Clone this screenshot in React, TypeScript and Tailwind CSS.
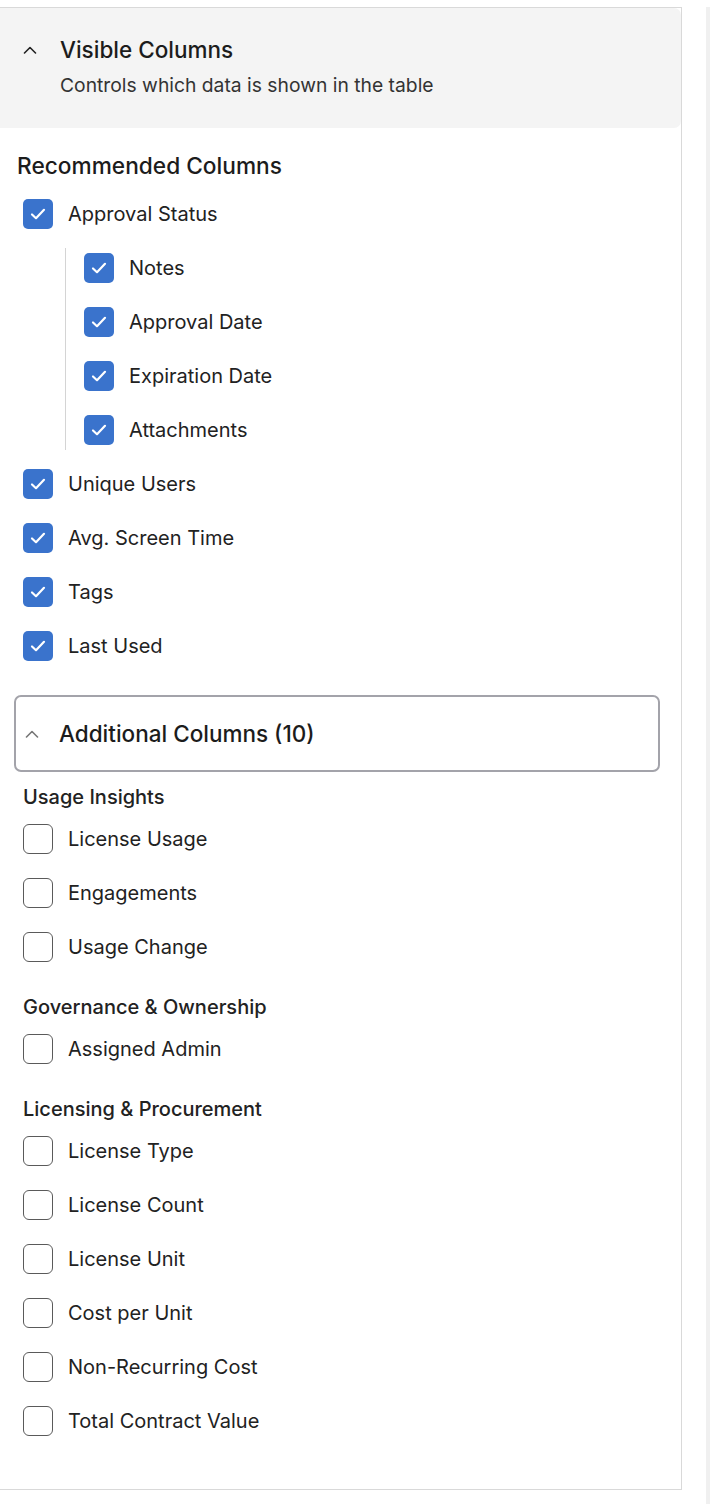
import React, { useState } from 'react';

interface Item {
  label: string;
  checked: boolean;
}

const CheckIcon = () => (
  <svg width="20" height="20" viewBox="0 0 20 20" fill="none">
    <path d="M4 10.5 L8 14.2 L16 5.8" stroke="white" strokeWidth="2.2" strokeLinecap="round" strokeLinejoin="round" />
  </svg>
);

const Chevron = ({ className }: { className: string }) => (
  <svg width="14" height="8" viewBox="0 0 14 8" fill="none" className={className}>
    <path d="M1.5 7 L7 1.5 L12.5 7" stroke="currentColor" strokeWidth="1.6" strokeLinecap="round" strokeLinejoin="round" />
  </svg>
);

const CheckRow = ({ item, onToggle }: { item: Item; onToggle: () => void }) => (
  <label className="flex h-[54px] items-center cursor-pointer">
    <span
      onClick={onToggle}
      className={
        item.checked
          ? 'flex h-[30px] w-[30px] shrink-0 items-center justify-center rounded-[5px] bg-[#3a73cc]'
          : 'flex h-[30px] w-[30px] shrink-0 items-center justify-center rounded-[6px] border border-[#5a5a5a] bg-white'
      }
    >
      {item.checked && <CheckIcon />}
    </span>
    <span className="ml-[15px] text-[20px] text-[#222]">{item.label}</span>
  </label>
);

const App: React.FC = () => {
  const [recommended, setRecommended] = useState<Item[]>([
    { label: 'Approval Status', checked: true },
    { label: 'Notes', checked: true },
    { label: 'Approval Date', checked: true },
    { label: 'Expiration Date', checked: true },
    { label: 'Attachments', checked: true },
    { label: 'Unique Users', checked: true },
    { label: 'Avg. Screen Time', checked: true },
    { label: 'Tags', checked: true },
    { label: 'Last Used', checked: true },
  ]);

  const [groups, setGroups] = useState<{ title: string; items: Item[] }[]>([
    {
      title: 'Usage Insights',
      items: [
        { label: 'License Usage', checked: false },
        { label: 'Engagements', checked: false },
        { label: 'Usage Change', checked: false },
      ],
    },
    {
      title: 'Governance & Ownership',
      items: [{ label: 'Assigned Admin', checked: false }],
    },
    {
      title: 'Licensing & Procurement',
      items: [
        { label: 'License Type', checked: false },
        { label: 'License Count', checked: false },
        { label: 'License Unit', checked: false },
        { label: 'Cost per Unit', checked: false },
        { label: 'Non-Recurring Cost', checked: false },
        { label: 'Total Contract Value', checked: false },
      ],
    },
  ]);

  const toggleRec = (i: number) =>
    setRecommended((prev) => prev.map((it, idx) => (idx === i ? { ...it, checked: !it.checked } : it)));

  const toggleGroup = (g: number, i: number) =>
    setGroups((prev) =>
      prev.map((grp, gi) =>
        gi === g
          ? { ...grp, items: grp.items.map((it, ii) => (ii === i ? { ...it, checked: !it.checked } : it)) }
          : grp
      )
    );

  return (
    <div className="flex min-h-[1504px] bg-white pt-[7px] font-['Inter',sans-serif]">
      <div className="w-[682px] self-start border-y border-r border-[#d9d9d9] pb-[41px]">
        {/* header */}
        <div className="flex h-[120px] flex-col rounded-r-[7px] bg-[#f4f4f4] pt-[28px]">
          <div className="flex h-[28px] items-center">
            <Chevron className="ml-[23px] mr-[23px] text-[#222]" />
            <span className="text-[22.5px] font-medium text-[#1c1c1c]">Visible Columns</span>
          </div>
          <div className="mt-[7px] pl-[60px] text-[19.3px] text-[#333]">Controls which data is shown in the table</div>
        </div>

        <div className="mt-[24px] h-[28px] pl-[17px] text-[22.7px] font-medium leading-[28px] text-[#1c1c1c]">
          Recommended Columns
        </div>

        <div className="mt-[7px] pl-[23px]">
          <CheckRow item={recommended[0]} onToggle={() => toggleRec(0)} />
          <div className="flex">
            <div className="my-[7px] ml-[42px] w-px bg-[#d4d4d4]" />
            <div className="pl-[18px]">
              {recommended.slice(1, 5).map((it, i) => (
                <CheckRow key={it.label} item={it} onToggle={() => toggleRec(i + 1)} />
              ))}
            </div>
          </div>
          {recommended.slice(5).map((it, i) => (
            <CheckRow key={it.label} item={it} onToggle={() => toggleRec(i + 5)} />
          ))}
        </div>

        {/* additional */}
        <div className="ml-[14px] mr-[21px] mt-[22px] flex h-[77px] items-center rounded-[7px] border-2 border-[#a3a3aa]">
          <Chevron className="ml-[9px] mr-[20px] text-[#777]" />
          <span className="text-[22.5px] font-medium text-[#1c1c1c]">Additional Columns (10)</span>
        </div>

        <div className="pl-[23px]">
          {groups.map((grp, gi) => (
            <div key={grp.title} className={gi === 0 ? 'mt-[11px]' : 'mt-[19px]'}>
              <div className="mb-px h-[28px] text-[20px] font-medium leading-[28px] text-[#222]">{grp.title}</div>
              {grp.items.map((it, ii) => (
                <CheckRow key={it.label} item={it} onToggle={() => toggleGroup(gi, ii)} />
              ))}
            </div>
          ))}
        </div>
      </div>
      <div className="flex-1" />
      <div className="w-[4px] bg-[#f0f0f0]" />
    </div>
  );
};

export default App;
